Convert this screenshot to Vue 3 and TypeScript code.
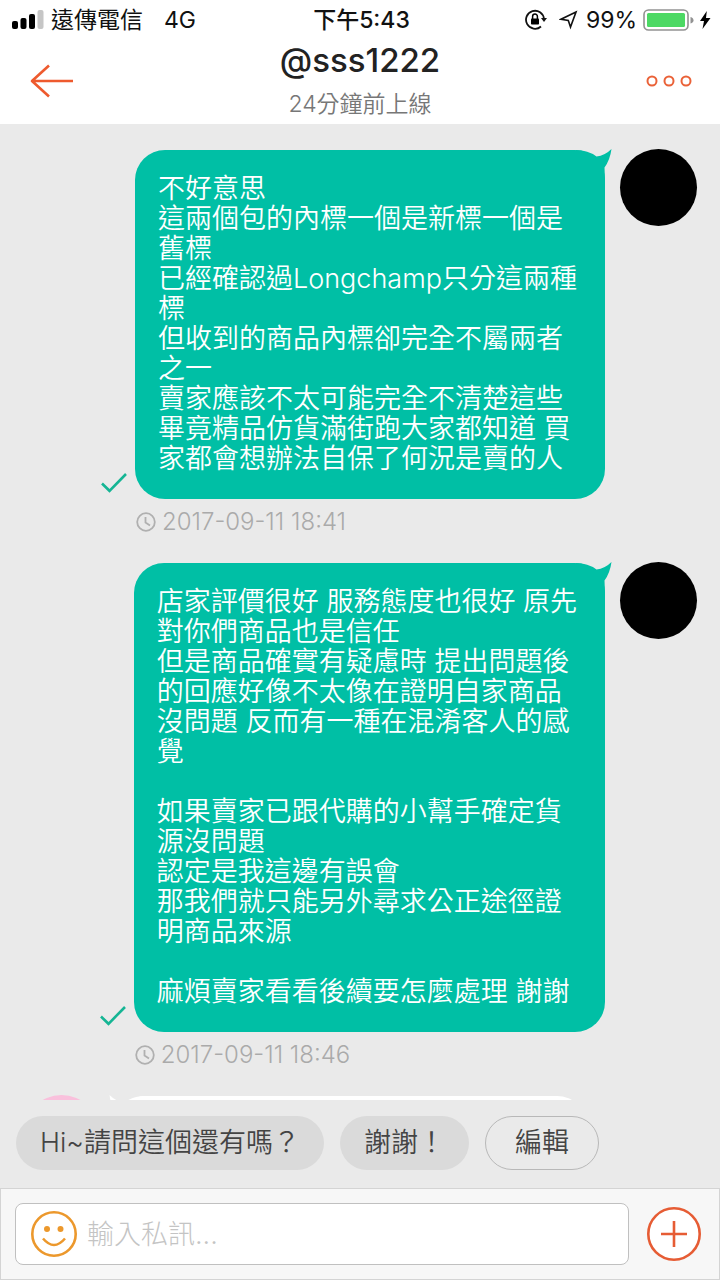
<script setup lang="ts">
import { ref } from 'vue'

interface Message {
  id: number
  lines: string[]
  time: string
}

const messages: Message[] = [
  {
    id: 1,
    lines: [
      '不好意思',
      '這兩個包的內標一個是新標一個是',
      '舊標',
      '已經確認過Longchamp只分這兩種',
      '標',
      '但收到的商品內標卻完全不屬兩者',
      '之一',
      '賣家應該不太可能完全不清楚這些',
      '畢竟精品仿貨滿街跑大家都知道 買',
      '家都會想辦法自保了何況是賣的人',
    ],
    time: '2017-09-11 18:41',
  },
  {
    id: 2,
    lines: [
      '店家評價很好 服務態度也很好 原先',
      '對你們商品也是信任',
      '但是商品確實有疑慮時 提出問題後',
      '的回應好像不太像在證明自家商品',
      '沒問題 反而有一種在混淆客人的感',
      '覺',
      '',
      '如果賣家已跟代購的小幫手確定貨',
      '源沒問題',
      '認定是我這邊有誤會',
      '那我們就只能另外尋求公正途徑證',
      '明商品來源',
      '',
      '麻煩賣家看看後續要怎麼處理 謝謝',
    ],
    time: '2017-09-11 18:46',
  },
]

const quickReplies: string[] = ['Hi~請問這個還有嗎？', '謝謝！']
const draft = ref('')
</script>

<template>
  <div class="app">
    <header class="header">
      <div class="status">
        <div class="status-left">
          <svg class="signal" width="32" height="20" viewBox="0 0 32 20" aria-hidden="true">
            <rect x="0" y="11" width="6" height="8" rx="2" fill="#000" />
            <rect x="8.500" y="8" width="6" height="11" rx="2" fill="#000" />
            <rect x="17" y="4" width="6" height="15" rx="2" fill="#000" />
            <rect x="25.500" y="0" width="6" height="19" rx="2" fill="#c6c6c6" />
          </svg>
          <span class="carrier">遠傳電信</span>
          <span>4G</span>
        </div>
        <div class="clock">下午5:43</div>
        <div class="status-right">
          <svg width="22" height="22" viewBox="0 0 22 22" aria-hidden="true">
            <path d="M16 17.500A9 9 0 1 1 19 10" fill="none" stroke="#111" stroke-width="1.800" />
            <path d="M16 9h6l-3 4z" fill="#111" />
            <rect x="6" y="9.500" width="8" height="6" rx="0.800" fill="#000" />
            <path d="M7.600 10V7.500a2.400 2.400 0 0 1 4.800 0V10" fill="none" stroke="#000" stroke-width="1.500" />
          </svg>
          <svg class="locate" width="19" height="20" viewBox="0 0 19 20" aria-hidden="true">
            <path d="M17 2L2 9.200l7.300 1.300L11.500 17z" fill="none" stroke="#111" stroke-width="1.600" stroke-linejoin="miter" />
          </svg>
          <span class="percent">99%</span>
          <svg class="battery" width="51" height="22" viewBox="0 0 51 22" aria-hidden="true">
            <rect x="1" y="1" width="44" height="20" rx="4.500" fill="#fff" stroke="#929292" stroke-width="1.600" />
            <rect x="4" y="4" width="38" height="14" rx="1.500" fill="#4cd964" />
            <path d="M47.500 8q3 .8 3 3.300t-3 3.300z" fill="#929292" />
          </svg>
          <svg class="bolt" width="12" height="18" viewBox="0 0 12 18" aria-hidden="true">
            <path d="M7.800 0L1 10h4L3.500 18L11.500 7H7z" fill="#000" />
          </svg>
        </div>
      </div>
      <div class="nav">
        <button class="icon-button" type="button" aria-label="返回">
          <svg width="44" height="34" viewBox="0 0 44 34">
            <path d="M19 1.500L2 17l17 15.500M2 17h41" fill="none" stroke="#ee5a2e" stroke-width="2.600" stroke-linejoin="round" />
          </svg>
        </button>
        <div class="identity">
          <h1 class="name">@sss1222</h1>
          <p class="last-seen">24分鐘前上線</p>
        </div>
        <button class="icon-button more" type="button" aria-label="更多">
          <svg width="46" height="12" viewBox="0 0 46 12">
            <g fill="none" stroke="#ea6238" stroke-width="2">
              <circle cx="6" cy="6" r="4.500" />
              <circle cx="23" cy="6" r="4.500" />
              <circle cx="40" cy="6" r="4.500" />
            </g>
          </svg>
        </button>
      </div>
    </header>

    <main class="chat">
      <article v-for="m in messages" :key="m.id" class="message">
        <svg class="check" width="26" height="20" viewBox="0 0 26 20" aria-hidden="true">
          <path d="M1 10.500l7.500 7.300L25 1" fill="none" stroke="#15b594" stroke-width="2.600" />
        </svg>
        <div class="body">
          <div class="bubble">
            <p class="text">{{ m.lines.join('\n') }}</p>
            <svg class="tail" width="36" height="31" viewBox="0 0 36 31" aria-hidden="true">
              <path d="M0 1Q12 1 20.500 7.500Q29 6.500 35.500 0Q34 11 28.500 18.500L29 31H0z" fill="#00bfa5" />
            </svg>
          </div>
          <div class="meta">
            <svg width="20" height="20" viewBox="0 0 20 20" aria-hidden="true">
              <circle cx="10" cy="10" r="8.800" fill="none" stroke="#b0b0b0" stroke-width="1.800" />
              <path d="M9.500 5v5.500l4.500 3" fill="none" stroke="#b0b0b0" stroke-width="1.800" />
            </svg>
            <time>{{ m.time }}</time>
          </div>
        </div>
        <div class="avatar"></div>
      </article>
      <article class="message incoming">
        <div class="avatar pink"></div>
        <div class="bubble white">
          <svg class="tail left" width="36" height="31" viewBox="0 0 36 31" aria-hidden="true">
            <path d="M36 1Q24 1 15.500 7.500Q7 6.500 0.500 0Q2 11 7.500 18.500L7 31H36z" fill="#fff" />
          </svg>
        </div>
      </article>
    </main>

    <div class="quick">
      <button v-for="q in quickReplies" :key="q" class="chip" type="button">{{ q }}</button>
      <button class="chip outline" type="button">編輯</button>
    </div>

    <footer class="composer">
      <div class="field">
        <button class="icon-button" type="button" aria-label="表情">
          <svg width="46" height="46" viewBox="0 0 46 46">
            <circle cx="23" cy="23" r="21.700" fill="none" stroke="#ec982c" stroke-width="2.600" />
            <circle cx="16" cy="18" r="3" fill="#ec982c" />
            <circle cx="29.500" cy="18" r="3" fill="#ec982c" />
            <path d="M12 27.500q11 13 22 0" fill="none" stroke="#ec982c" stroke-width="2.500" />
          </svg>
        </button>
        <input v-model="draft" class="input" type="text" placeholder="輸入私訊..." aria-label="輸入私訊" />
      </div>
      <button class="icon-button" type="button" aria-label="新增">
        <svg width="54" height="54" viewBox="0 0 54 54">
          <circle cx="27" cy="27" r="25.700" fill="#fff" stroke="#e65c34" stroke-width="2.600" />
          <path d="M27 14v26M14 27h26" stroke="#e65c34" stroke-width="2.600" />
        </svg>
      </button>
    </footer>
  </div>
</template>

<style>
body {
  margin: 0;
}
</style>

<style scoped>
.app {
  display: flex;
  flex-direction: column;
  height: 100vh;
  background: #eaeaea;
  font-family: Inter, "Noto Sans CJK TC", sans-serif;
  font-weight: 350;
  overflow: hidden;
}

button {
  font: inherit;
  border: 0;
  padding: 0;
  background: none;
  cursor: pointer;
}

svg {
  display: block;
  flex: none;
}

.icon-button {
  display: flex;
  flex: none;
}

.header {
  height: 124px;
  flex: none;
  background: #fff;
}

.status {
  display: grid;
  grid-template-columns: 1fr auto 1fr;
  align-items: center;
  height: 40px;
  padding: 0 9px 0 12px;
  font-size: 23px;
  font-weight: 400;
  line-height: 28px;
  color: #111;
}

.status-left,
.status-right {
  display: flex;
  align-items: center;
}

.status-right {
  justify-content: flex-end;
}

.carrier {
  margin: 0 21px 0 7px;
}

.clock {
  font-weight: 500;
}

.locate {
  margin: 0 8px 0 12px;
}

.battery {
  margin: 0 5px 0 6px;
}

.nav {
  display: flex;
  align-items: center;
  justify-content: space-between;
  height: 82px;
  padding: 0 28px 0 30px;
}

.identity {
  padding-bottom: 2px;
  text-align: center;
}

.name {
  margin: 0;
  font-size: 33px;
  line-height: 40px;
  font-weight: 500;
  color: #222;
}

.last-seen {
  margin: 8px 0 0;
  font-size: 23px;
  line-height: 32px;
  color: #777;
}

.chat {
  flex: 1;
  min-height: 0;
  overflow: hidden;
  display: flex;
  flex-direction: column;
  gap: 28px;
  padding: 25px 23px 0;
}

.message {
  display: flex;
  flex: none;
  justify-content: flex-end;
  align-items: flex-start;
}

.check {
  align-self: flex-end;
  margin: 0 8px 41px 0;
}

.body {
  margin-top: 1px;
}

.bubble {
  position: relative;
  padding: 24px 28px 25px 23px;
  border-radius: 30px;
  background: #00bfa5;
  color: #fff;
}

.text {
  margin: 0;
  font-size: 27px;
  line-height: 30px;
  white-space: pre-wrap;
}

.tail {
  position: absolute;
  top: -1px;
  right: -7px;
}

.tail.left {
  right: auto;
  left: -7px;
}

.meta {
  display: flex;
  align-items: center;
  gap: 6px;
  height: 24px;
  margin-top: 11px;
  padding-left: 1px;
  font-size: 24px;
  line-height: 24px;
  color: #aaa;
}

.avatar {
  flex: none;
  width: 77px;
  height: 77px;
  margin-left: 15px;
  border-radius: 50%;
  background: #000;
}

.incoming {
  justify-content: flex-start;
}

.avatar.pink {
  margin: 0 16px 0 0;
  background: #f9c0dc;
}

.bubble.white {
  flex: 1;
  max-width: 420px;
  height: 60px;
  margin-top: 1px;
  background: #fff;
}

.quick {
  display: flex;
  flex: none;
  gap: 16px;
  padding: 16px 16px 18px;
}

.chip {
  height: 54px;
  padding: 0 24px;
  border-radius: 27px;
  background: #dadada;
  color: #444;
  font-size: 27px;
  line-height: 30px;
  white-space: nowrap;
}

.chip.outline {
  padding: 0 29px;
  border: 1px solid #b8b8b8;
  background: transparent;
}

.composer {
  display: flex;
  flex: none;
  align-items: center;
  gap: 18px;
  height: 92px;
  box-sizing: border-box;
  padding: 0 18px 0 14px;
  border: 1px solid #d4d4d4;
  background: #f7f7f7;
}

.field {
  display: flex;
  flex: 1;
  align-items: center;
  gap: 10px;
  height: 62px;
  box-sizing: border-box;
  padding: 0 15px;
  border: 1px solid #c0c0c0;
  border-radius: 8px;
  background: #fff;
}

.input {
  flex: 1;
  min-width: 0;
  padding: 0;
  border: 0;
  outline: 0;
  background: none;
  font: inherit;
  font-size: 27px;
  font-weight: 300;
  color: #333;
}

.input::placeholder {
  color: #c4c4c4;
  opacity: 1;
}
</style>
